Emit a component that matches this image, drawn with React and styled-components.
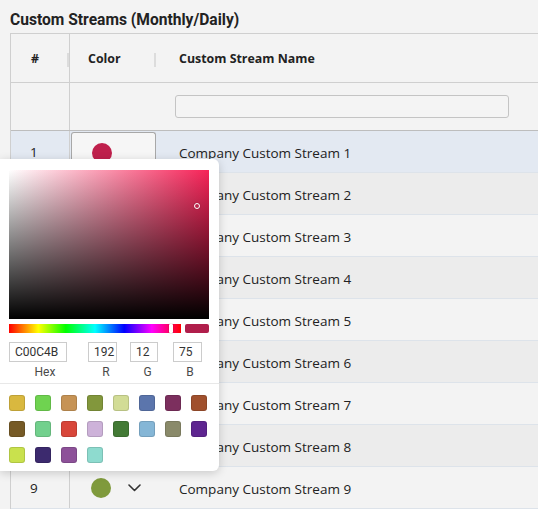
import styled, { createGlobalStyle } from 'styled-components';

const GlobalStyle = createGlobalStyle`
  html, body {
    margin: 0;
    padding: 0;
    background: #f3f3f3;
    overflow: hidden;
  }
  body {
    font-family: "Open Sans", "Noto Sans", sans-serif;
    color: #222;
  }
`;

const streams = [
  { id: 1, color: '#bf204c' },
  { id: 2, color: '#d9b83f' },
  { id: 3, color: '#6fd350' },
  { id: 4, color: '#c69355' },
  { id: 5, color: '#5b75ac' },
  { id: 6, color: '#7c2f5e' },
  { id: 7, color: '#a0502d' },
  { id: 8, color: '#437a35' },
  { id: 9, color: '#7f9a3c' },
];

const swatches = [
  '#d9b83f', '#6fd350', '#c69355', '#82973c', '#d2dc96', '#5b75ac', '#7c2f5e', '#a0502d',
  '#765a26', '#72d08d', '#d8463a', '#cdb2d9', '#437a35', '#85b6d6', '#8a8a6a', '#5e2590',
  '#c9e14d', '#3c2a6e', '#8d5199', '#8edbcf',
];

const Chevron = () => (
  <svg width="13" height="8" viewBox="0 0 13 8" fill="none">
    <path d="M1 1l5.5 5.5L12 1" stroke="#333" strokeWidth="1.6" strokeLinecap="round" strokeLinejoin="round" />
  </svg>
);

const App = () => {
  return (
    <Page>
      <GlobalStyle />
      <Title>Custom Streams (Monthly/Daily)</Title>
      <Table>
        <HeadRow>
          <HeadCell $pad="20px">#</HeadCell>
          <HeadCell $pad="18px">Color</HeadCell>
          <HeadCell $pad="19px">Custom Stream Name</HeadCell>
        </HeadRow>
        <FilterRow>
          <Cell />
          <Cell />
          <FilterCell>
            <FilterInput />
          </FilterCell>
        </FilterRow>
        {streams.map((s, i) => (
          <Row key={s.id} $selected={i === 0} $even={i % 2 === 1}>
            <NumCell>{s.id}</NumCell>
            <ColorCell>
              {i === 0 ? (
                <OpenButton>
                  <Dot $color={s.color} />
                </OpenButton>
              ) : (
                <ColorPick>
                  <Dot $color={s.color} />
                  <Chevron />
                </ColorPick>
              )}
            </ColorCell>
            <NameCell>Company Custom Stream {s.id}</NameCell>
          </Row>
        ))}
      </Table>

      <Picker>
        <Saturation>
          <Marker />
        </Saturation>
        <HueRow>
          <Hue>
            <HueThumb />
          </Hue>
          <Preview />
        </HueRow>
        <Fields>
          <Field $w="58px">
            <FieldInput defaultValue="C00C4B" />
            <FieldLabel $shift="14px">Hex</FieldLabel>
          </Field>
          <Field $w="29px" $ml="21px">
            <FieldInput defaultValue="192" />
            <FieldLabel $shift="7px">R</FieldLabel>
          </Field>
          <Field $w="28px" $ml="13px">
            <FieldInput defaultValue="12" />
            <FieldLabel $shift="7px">G</FieldLabel>
          </Field>
          <Field $w="29px" $ml="15px">
            <FieldInput defaultValue="75" />
            <FieldLabel $shift="5px">B</FieldLabel>
          </Field>
        </Fields>
        <Swatches>
          {swatches.map((c) => (
            <Swatch key={c} $color={c} />
          ))}
        </Swatches>
      </Picker>
    </Page>
  );
};

export default App;

const Page = styled.div`
  position: relative;
  width: 538px;
  height: 509px;
  overflow: hidden;
`;

const Title = styled.h2`
  margin: 0;
  padding: 9px 0 0 10px;
  height: 24px;
  font-family: Roboto, "Noto Sans", sans-serif;
  font-size: 15.6px;
  font-weight: 700;
  line-height: 22px;
  color: #222;
`;

const Table = styled.div`
  margin-left: 10px;
  width: 560px;
  border-left: 1px solid #cfcfcf;
  border-top: 1px solid #cfcfcf;
`;

const HeadRow = styled.div`
  display: grid;
  grid-template-columns: 59px 90px 1fr;
  height: 48px;
  border-bottom: 1px solid #cfcfcf;
`;

const HeadCell = styled.div`
  position: relative;
  display: flex;
  align-items: center;
  padding-left: ${(p) => p.$pad || '0'};
  font-size: 12.4px;
  font-weight: 700;
  color: #222;
  &:first-child {
    border-right: 1px solid #cfcfcf;
  }
  &:first-child::after,
  &:nth-child(2)::after {
    content: '';
    position: absolute;
    top: 19px;
    height: 14px;
    width: 2px;
    background: #dcdcdc;
  }
  &:first-child::after {
    right: 0;
  }
  &:nth-child(2)::after {
    right: 4px;
  }
`;

const FilterRow = styled.div`
  display: grid;
  grid-template-columns: 59px 90px 1fr;
  height: 47px;
  border-bottom: 1px solid #bdbdbd;
`;

const Cell = styled.div`
  &:first-child {
    border-right: 1px solid #cfcfcf;
  }
`;

const FilterCell = styled.div`
  display: flex;
  align-items: center;
  padding-left: 15px;
`;

const FilterInput = styled.input`
  width: 334px;
  height: 23px;
  box-sizing: border-box;
  border: 1px solid #c4c4c4;
  border-radius: 3px;
  background: #f4f4f4;
  outline: none;
`;

const Row = styled.div`
  display: grid;
  grid-template-columns: 59px 90px 1fr;
  height: 41px;
  border-bottom: 1px solid #dde3ea;
  background: ${(p) => (p.$selected ? '#e3e9f2' : p.$even ? '#ececec' : '#f3f3f3')};
`;

const NumCell = styled.div`
  display: flex;
  align-items: center;
  padding-left: 19px;
  border-right: 1px solid #cfcfcf;
  font-size: 13.5px;
  color: #222;
`;

const ColorCell = styled.div`
  display: flex;
  align-items: stretch;
`;

const OpenButton = styled.div`
  width: 85px;
  margin-left: 1px;
  margin-top: 1px;
  box-sizing: border-box;
  border: 1px solid #a8a8a8;
  border-bottom: none;
  border-radius: 3px 3px 0 0;
  background: #f6f6f6;
  display: flex;
  align-items: center;
  padding-left: 20px;
`;

const ColorPick = styled.div`
  display: flex;
  align-items: center;
  gap: 17px;
  padding-left: 21px;
`;

const Dot = styled.span`
  width: 20px;
  height: 20px;
  border-radius: 50%;
  background: ${(p) => p.$color};
`;

const NameCell = styled.div`
  display: flex;
  align-items: center;
  padding-left: 19px;
  padding-top: 2px;
  font-size: 13.5px;
  color: #222;
`;

const Picker = styled.div`
  position: absolute;
  left: 0;
  top: 159px;
  width: 219px;
  height: 312px;
  box-sizing: border-box;
  background: #fff;
  border-radius: 0 6px 6px 0;
  box-shadow: 0 2px 10px rgba(0, 0, 0, 0.18);
  padding: 11px 9px 0 9px;
  font-family: Roboto, "Noto Sans", sans-serif;
`;

const Saturation = styled.div`
  position: relative;
  width: 200px;
  height: 149px;
  background:
    linear-gradient(to top, #000, rgba(0, 0, 0, 0)),
    linear-gradient(to right, #fff, hsl(345, 92%, 55%));
`;

const Marker = styled.span`
  position: absolute;
  left: 185px;
  top: 33px;
  width: 4px;
  height: 4px;
  border: 1.5px solid #fff;
  border-radius: 50%;
  box-shadow: 0 0 1px rgba(0, 0, 0, 0.5);
`;

const HueRow = styled.div`
  display: flex;
  gap: 4px;
  margin-top: 5px;
  height: 9px;
`;

const Hue = styled.div`
  position: relative;
  width: 172px;
  background: linear-gradient(
    to right,
    #f00 0%,
    #ff0 17%,
    #0f0 33%,
    #0ff 50%,
    #00f 67%,
    #f0f 83%,
    #f00 100%
  );
`;

const HueThumb = styled.span`
  position: absolute;
  left: 160px;
  top: 0;
  width: 4px;
  height: 9px;
  background: #fff;
  border-radius: 1px;
  box-shadow: 0 0 1px rgba(0, 0, 0, 0.6);
`;

const Preview = styled.div`
  width: 24px;
  border-radius: 2px;
  background: #b01e4b;
`;

const Fields = styled.div`
  display: flex;
  margin-top: 9px;
  height: 41px;
`;

const Field = styled.div`
  display: flex;
  flex-direction: column;
  align-items: center;
  width: ${(p) => p.$w};
  margin-left: ${(p) => p.$ml || '0'};
`;

const FieldInput = styled.input`
  width: 100%;
  height: 20px;
  box-sizing: border-box;
  border: 1px solid #ccc;
  padding: 0 0 0 5px;
  font-family: Roboto, sans-serif;
  font-size: 12px;
  color: #333;
  outline: none;
`;

const FieldLabel = styled.span`
  margin-top: 2px;
  padding-left: ${(p) => p.$shift || '0'};
  font-size: 12px;
  line-height: 16px;
  color: #4a4a4a;
`;

const Swatches = styled.div`
  display: grid;
  grid-template-columns: repeat(8, 16px);
  grid-auto-rows: 16px;
  column-gap: 10px;
  row-gap: 10px;
  margin: 0 -9px;
  padding: 11px 9px 0 9px;
  border-top: 1px solid #e8e8e8;
`;

const Swatch = styled.span`
  border-radius: 3px;
  background: ${(p) => p.$color};
  box-shadow: inset 0 0 0 1px rgba(0, 0, 0, 0.12);
`;
